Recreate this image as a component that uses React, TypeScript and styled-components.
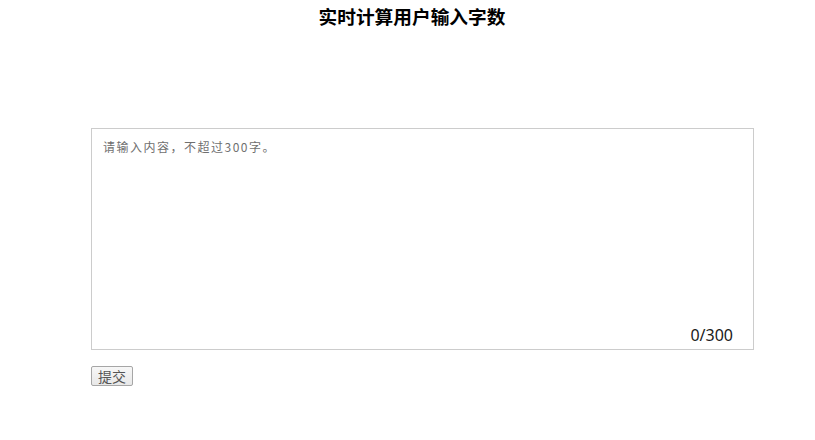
import React, { useState } from "react";
import styled, { createGlobalStyle } from "styled-components";

const GlobalStyle = createGlobalStyle`
  html, body {
    margin: 0;
    padding: 0;
    background: #ffffff;
  }
  body {
    font-family: "Noto Sans", "Noto Sans CJK SC", sans-serif;
    color: #000;
  }
`;

const Page = styled.div`
  display: flex;
  flex-direction: column;
  padding: 3px 61px 0 91px;
`;

const Title = styled.h3`
  margin: 0 0 0 -21px;
  font-family: "Noto Sans CJK SC", sans-serif;
  font-size: 18.7px;
  line-height: 26px;
  font-weight: 700;
  text-align: center;
  color: #000;
`;

const Field = styled.div`
  position: relative;
  margin-top: 99px;
  width: 663px;
  height: 222px;
`;

const TextArea = styled.textarea`
  box-sizing: border-box;
  width: 100%;
  height: 100%;
  margin: 0;
  padding: 10px 10px 30px 11px;
  border: 1px solid #cccccc;
  outline: none;
  resize: none;
  font-family: "Noto Sans CJK SC", sans-serif;
  font-size: 12px;
  line-height: 16px;
  letter-spacing: 1.5px;
  color: #333;
  display: block;

  &::placeholder {
    color: #6f6f6f;
    opacity: 1;
  }
`;

const Counter = styled.span`
  position: absolute;
  right: 21px;
  bottom: 4px;
  font-family: "Noto Sans", sans-serif;
  font-size: 16px;
  line-height: 22px;
  color: #1a1a1a;
  pointer-events: none;
`;

const Actions = styled.div`
  display: flex;
  margin-top: 16px;
`;

const SubmitButton = styled.button`
  box-sizing: border-box;
  height: 20px;
  width: 42px;
  padding: 0;
  margin: 0;
  border: 1px solid #a6a6a6;
  border-radius: 2px;
  background: linear-gradient(#f7f7f7, #e8e8e8);
  font-family: "Noto Sans CJK SC", sans-serif;
  font-size: 14px;
  line-height: 18px;
  color: #555;
  cursor: pointer;
`;

const MAX = 300;

export default function App() {
  const [text, setText] = useState("");
  return (
    <>
      <GlobalStyle />
      <Page>
        <Title>实时计算用户输入字数</Title>
        <Field>
          <TextArea
            value={text}
            maxLength={MAX}
            placeholder="请输入内容，不超过300字。"
            onChange={(e) => setText(e.target.value.slice(0, MAX))}
          />
          <Counter>
            {text.length}/{MAX}
          </Counter>
        </Field>
        <Actions>
          <SubmitButton type="button">提交</SubmitButton>
        </Actions>
      </Page>
    </>
  );
}
